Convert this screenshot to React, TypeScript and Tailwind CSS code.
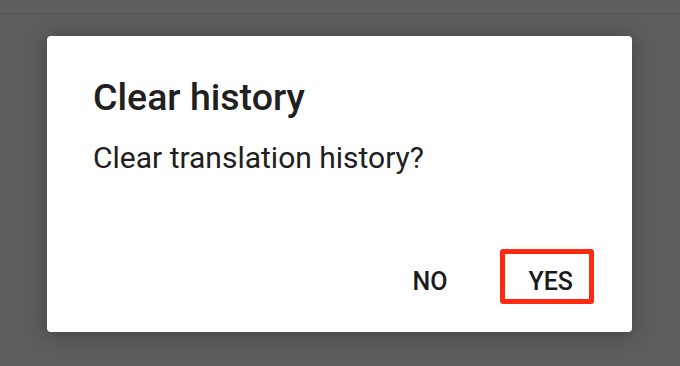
import React from "react";

export default function App() {
  return (
    <div className="w-[680px] h-[366px] overflow-hidden bg-[#5d5d5d] flex flex-col" style={{ fontFamily: "Roboto, 'Noto Sans', sans-serif" }}>
      <div className="h-[14px] shrink-0 bg-[#5f5f5f] border-b border-[#545454]" />
      <div className="ml-[47px] mt-[22px] w-[585px] h-[296px] bg-white rounded-[4px] shadow-[0_2px_20px_rgba(0,0,0,0.3)] flex flex-col pl-[46px] pr-[38px] pt-[43.1px]">
        <div className="text-[37.5px] leading-none font-medium text-[#202020]">Clear history</div>
        <div className="mt-[26.5px] text-[30px] leading-none text-[#202020]">Clear translation history?</div>
        <div className="mt-[76.4px] flex justify-end items-start">
          <div className="pt-[19.5px] text-[25px] leading-none font-medium text-[#1a1a1a] mr-[53px]">NO</div>
          <div className="border-[5px] border-[#ff2a12] rounded-[3px] pt-[14.5px] pb-[5px] pl-[23px] pr-[16px] text-[25px] leading-none font-medium text-[#1a1a1a]">YES</div>
        </div>
      </div>
    </div>
  );
}
